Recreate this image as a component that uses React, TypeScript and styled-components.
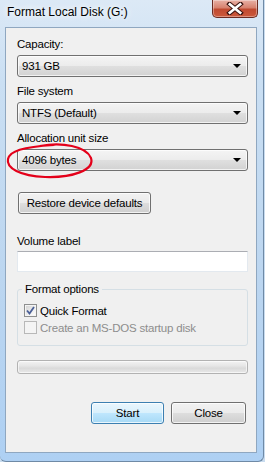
import React from 'react'
import styled, { createGlobalStyle } from 'styled-components'

const GlobalStyle = createGlobalStyle`
  html, body {
    margin: 0;
    padding: 0;
    background: #c9dcef;
  }
  body {
    font-family: 'Segoe UI', 'Liberation Sans', Arial, sans-serif;
    font-size: 11.5px;
    letter-spacing: -0.2px;
    color: #000;
  }
`

const Window = styled.div`
  position: relative;
  width: 264px;
  height: 462px;
  box-sizing: border-box;
  display: flex;
  flex-direction: column;
  padding: 0 6px 8px 5px;
  background: linear-gradient(180deg, #dce9f6 0%, #cadff3 18%, #bcd6f0 60%, #aed0f3 100%);
  border-right: 1px solid #6f8aa6;
  border-bottom: 1px solid #6f8aa6;
  border-radius: 0 0 6px 6px;
`

const TitleBar = styled.div`
  height: 27px;
  display: flex;
  align-items: flex-start;
`

const Title = styled.div`
  padding: 5px 0 0 2px;
  font-size: 12px;
  letter-spacing: 0;
  line-height: 15px;
  color: #000;
  text-shadow: 0 0 6px #fff, 0 0 10px #fff;
`

const CloseButton = styled.button`
  margin-left: auto;
  margin-right: -1px;
  width: 46px;
  height: 18px;
  padding: 0;
  display: flex;
  align-items: center;
  justify-content: center;
  border: 1px solid #6b2b22;
  border-top: none;
  border-radius: 0 0 5px 5px;
  background: linear-gradient(180deg, #e8b1a6 0%, #d7826f 45%, #c04a31 55%, #cc5a3c 100%);
  box-shadow: inset 0 0 0 1px rgba(255, 255, 255, 0.35);
`

const Client = styled.div`
  flex: 1;
  display: flex;
  flex-direction: column;
  padding: 9px 8px 0 11px;
  background: #f0f0f0;
  border: 1px solid #8fa7c0;
`

const Label = styled.div<{ $gap?: number }>`
  line-height: 15px;
  margin-top: ${({ $gap }) => $gap ?? 0}px;
  margin-bottom: 3px;
`

const Combo = styled.div`
  box-sizing: border-box;
  width: 231px;
  height: 22px;
  display: flex;
  align-items: center;
  padding: 0 6px 0 4px;
  border: 1px solid #707070;
  border-radius: 3px;
  background: linear-gradient(180deg, #f4f4f4 0%, #ececec 48%, #dfdfdf 52%, #d2d2d2 100%);
  box-shadow: inset 0 0 0 1px rgba(255, 255, 255, 0.7);
  line-height: 15px;
`

const ComboText = styled.span`
  flex: 1;
`

const Arrow = styled.span`
  width: 0;
  height: 0;
  border-left: 4px solid transparent;
  border-right: 4px solid transparent;
  border-top: 4px solid #000;
`

const Button = styled.button<{ $width: number; $primary?: boolean }>`
  box-sizing: border-box;
  width: ${({ $width }) => $width}px;
  height: 22px;
  padding: 0;
  font: inherit;
  letter-spacing: inherit;
  color: #000;
  border: 1px solid ${({ $primary }) => ($primary ? '#3c7fb1' : '#707070')};
  border-radius: 3px;
  background: ${({ $primary }) =>
    $primary
      ? 'linear-gradient(180deg, #eaf6fd 0%, #d9f0fc 48%, #bee6fd 52%, #a7d9f5 100%)'
      : 'linear-gradient(180deg, #f2f2f2 0%, #ebebeb 48%, #dddddd 52%, #cfcfcf 100%)'};
  box-shadow: inset 0 0 0 1px rgba(255, 255, 255, 0.75);
`

const TextBox = styled.div`
  box-sizing: border-box;
  width: 231px;
  height: 21px;
  background: #fff;
  border: 1px solid #e3e9ef;
  border-top-color: #abadb3;
`

const Group = styled.fieldset`
  margin: 10px 0 0;
  width: 231px;
  box-sizing: border-box;
  padding: 5px 6px 9px;
  border: 1px solid #d5dfe5;
  border-radius: 3px;
`

const Legend = styled.legend`
  margin-left: -2px;
  padding: 0 3px;
  line-height: 15px;
`

const CheckRow = styled.div<{ $disabled?: boolean }>`
  height: 17px;
  display: flex;
  align-items: center;
  gap: 3px;
  color: ${({ $disabled }) => ($disabled ? '#8d8d8d' : '#000')};
`

const Box = styled.span<{ $disabled?: boolean }>`
  box-sizing: border-box;
  width: 13px;
  height: 13px;
  display: flex;
  align-items: center;
  justify-content: center;
  border: 1px solid ${({ $disabled }) => ($disabled ? '#b8b8b8' : '#8e8f8f')};
  background: ${({ $disabled }) =>
    $disabled ? '#f4f4f4' : 'linear-gradient(135deg, #d0d0d0 0%, #f4f4f4 70%, #ffffff 100%)'};
  box-shadow: inset 0 0 0 1px #f4f4f4;
`

const Progress = styled.div`
  box-sizing: border-box;
  margin-top: 14px;
  width: 231px;
  height: 14px;
  border: 1px solid #b2b2b2;
  border-radius: 3px;
  background: linear-gradient(180deg, #f3f3f3 0%, #e6e6e6 40%, #dadada 60%, #e9e9e9 100%);
  box-shadow: inset 0 0 0 1px rgba(255, 255, 255, 0.6);
`

const ButtonRow = styled.div`
  margin-top: 28px;
  width: 229px;
  display: flex;
  justify-content: flex-end;
  gap: 7px;
`

const Markup = styled.svg`
  position: absolute;
  left: 0;
  top: 0;
  pointer-events: none;
`

const CloseGlyph = () => (
  <svg width="18" height="13" viewBox="0 0 18 13">
    <path d="M3.5 2 L14.5 11 M14.5 2 L3.5 11" stroke="#3a1410" strokeWidth="4.6" strokeLinecap="square" />
    <path d="M3.8 2.3 L14.2 10.7 M14.2 2.3 L3.8 10.7" stroke="#fff" strokeWidth="2.6" strokeLinecap="square" />
  </svg>
)

const Check = () => (
  <svg width="9" height="9" viewBox="0 0 9 9">
    <path d="M1 4.5 L3.5 7.5 L8 1" fill="none" stroke="#4a5f97" strokeWidth="1.8" />
  </svg>
)

export default function App() {
  return (
    <>
      <GlobalStyle />
      <Window>
        <TitleBar>
          <Title>Format Local Disk (G:)</Title>
          <CloseButton aria-label="Close">
            <CloseGlyph />
          </CloseButton>
        </TitleBar>
        <Client>
          <Label>Capacity:</Label>
          <Combo>
            <ComboText>931 GB</ComboText>
            <Arrow />
          </Combo>
          <Label $gap={7}>File system</Label>
          <Combo>
            <ComboText>NTFS (Default)</ComboText>
            <Arrow />
          </Combo>
          <Label $gap={7}>Allocation unit size</Label>
          <Combo>
            <ComboText>4096 bytes</ComboText>
            <Arrow />
          </Combo>
          <div style={{ marginTop: 21, marginLeft: 1 }}>
            <Button $width={133}>Restore device defaults</Button>
          </div>
          <Label $gap={20} style={{ marginBottom: 2 }}>
            Volume label
          </Label>
          <TextBox />
          <Group>
            <Legend>Format options</Legend>
            <CheckRow>
              <Box>
                <Check />
              </Box>
              Quick Format
            </CheckRow>
            <CheckRow $disabled>
              <Box $disabled />
              Create an MS-DOS startup disk
            </CheckRow>
          </Group>
          <Progress />
          <ButtonRow>
            <Button $width={73} $primary>
              Start
            </Button>
            <Button $width={75}>Close</Button>
          </ButtonRow>
        </Client>
        <Markup width="264" height="462" viewBox="0 0 264 462">
          <path
            d="M40 146 C62 142 86 146 91 158 C95 170 72 178 45 177 C20 176 6 168 8 159 C10 151 22 147 54 145"
            fill="none"
            stroke="#e4001a"
            strokeWidth="2.2"
            strokeLinecap="round"
          />
        </Markup>
      </Window>
    </>
  )
}
